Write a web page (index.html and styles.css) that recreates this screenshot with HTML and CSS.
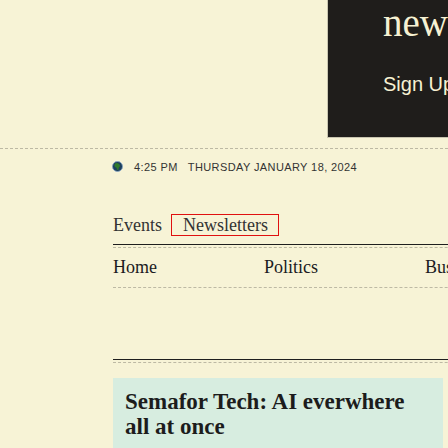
FILE: index.html
```html
<!DOCTYPE html>
<html lang="en">
<head>
<meta charset="utf-8">
<title>Semafor</title>
<link rel="stylesheet" href="styles.css">
</head>
<body>
<header class="top">
  <div class="promo">
    <div class="promo-title">newsletters</div>
    <div class="promo-cta">Sign Up</div>
  </div>
</header>
<div class="dash full"></div>
<main class="col">
  <div class="meta">
    <svg class="globe" viewBox="0 0 12 12" width="11" height="11" aria-hidden="true">
      <circle cx="6" cy="6" r="5.5" fill="#1d3f5e" stroke="#8aa6c2" stroke-width="1"/>
      <path d="M3.2 2.6 L5.8 2.2 L7.6 3.2 L8.8 4.6 L8.4 6.4 L7.4 7.4 L7 9.6 L5.9 10.2 L5.4 8.4 L4.6 7 L3.2 6.6 L2.6 5 Z" fill="#2f7a2a"/>
    </svg>
    <span class="time">4:25 PM</span>
    <span class="date">THURSDAY JANUARY 18, 2024</span>
  </div>
  <nav class="nav1">
    <a class="nav1-item">Events</a>
    <a class="nav1-item boxed">Newsletters</a>
  </nav>
  <div class="solid r1"></div>
  <div class="dash d1"></div>
  <nav class="nav2">
    <a class="nav2-item">Home</a>
    <a class="nav2-item">Politics</a>
    <a class="nav2-item">Business</a>
  </nav>
  <div class="dash d2"></div>
  <div class="solid r2"></div>
  <div class="dash d1"></div>
  <article class="card">
    <h2 class="card-title">Semafor Tech: AI everwhere all at once</h2>
  </article>
</main>
</body>
</html>
```
FILE: styles.css
```css
html, body {
  margin: 0;
  padding: 0;
  overflow: hidden;
}
body {
  width: 448px;
  height: 448px;
  background: #f7f3d6;
  font-family: "Liberation Serif", "Times New Roman", serif;
  color: #1c1c1c;
}
.top {
  display: flex;
  justify-content: flex-end;
}
.promo {
  width: 121px;
  height: 138px;
  background: #1f1d1b;
  border-left: 1px solid #c9c5b0;
  border-bottom: 1px solid #c9c5b0;
  padding-left: 55px;
  box-sizing: border-box;
  overflow: hidden;
  white-space: nowrap;
  color: #f6f1d3;
}
.promo-title {
  font-family: "Liberation Serif", serif;
  font-size: 39px;
  line-height: 39px;
  margin-top: 3px;
  font-weight: 400;
}
.promo-cta {
  font-family: "Liberation Sans", Arial, sans-serif;
  font-size: 20px;
  line-height: 20px;
  margin-top: 32px;
}
.dash {
  border-top: 1px dashed #bdb9a4;
}
.full {
  margin-top: 10px;
}
.solid {
  border-top: 1px solid #1e1e1e;
}
.col {
  margin-left: 113px;
  width: 400px;
}
.meta {
  display: flex;
  align-items: center;
  height: 13px;
  margin-top: 11px;
  font-family: "Liberation Sans", Arial, sans-serif;
  font-size: 11px;
  letter-spacing: 0.4px;
  color: #333;
  white-space: nowrap;
}
.globe {
  display: block;
  margin-left: -1px;
  margin-right: 11px;
}
.time {
  margin-right: 10px;
}
.nav1 {
  display: flex;
  align-items: flex-start;
  margin-top: 41px;
  height: 20px;
  font-size: 18px;
  color: #333;
}
.nav1-item {
  line-height: 16px;
  padding-top: 3px;
}
.nav1-item.boxed {
  margin-left: 9px;
  padding: 2px 10px 0 11px;
  height: 18px;
  border: 1px solid #e01010;
  box-sizing: content-box;
}
.r1 {
  margin-top: 10px;
}
.d1 {
  margin-top: 2px;
}
.nav2 {
  display: flex;
  gap: 107px;
  margin-top: 10px;
  font-size: 18px;
  line-height: 18px;
  color: #1b1b1f;
  white-space: nowrap;
}
.d2 {
  margin-top: 11px;
}
.r2 {
  margin-top: 71px;
}
.card {
  margin-top: 15px;
  width: 330px;
  height: 80px;
  box-sizing: border-box;
  background: #d7ede0;
  padding: 11px 12px;
}
.card-title {
  margin: 0;
  font-size: 23px;
  line-height: 25px;
  font-weight: 700;
  letter-spacing: 0;
  color: #1c1c1c;
  width: 300px;
}
```
